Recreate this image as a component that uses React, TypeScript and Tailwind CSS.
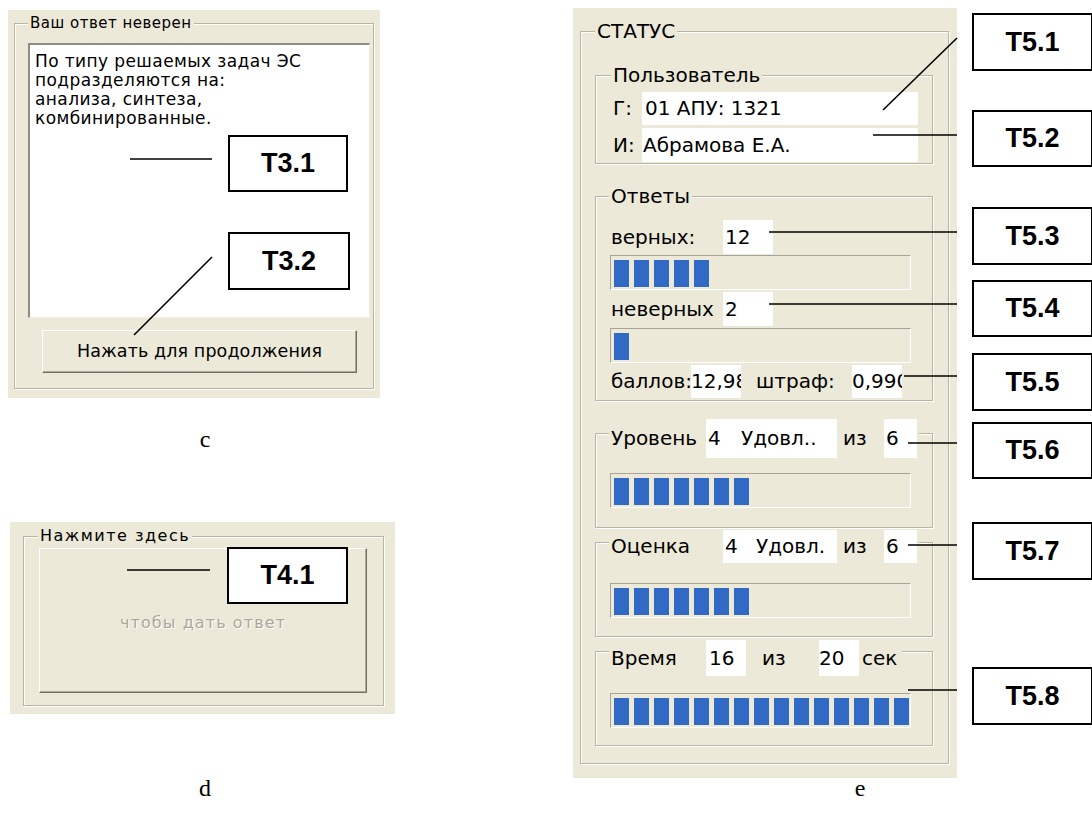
import React from 'react';

const groupBox =
  'border border-[#B8B5A6] shadow-[inset_1px_1px_0_#fff,1px_1px_0_#fff]';

const Progress = ({ count }: { count: number }) => (
  <div className="w-[301px] h-[35px] border border-t-[#A7A497] border-l-[#A7A497] border-b-white border-r-white bg-[#ECE9D8] overflow-hidden flex gap-[5px] pl-[3px] pt-[4px] pb-[2px]">
    {Array.from({ length: count }).map((_, i) => (
      <div key={i} className="w-[15px] h-full shrink-0 bg-[#316AC5]" />
    ))}
  </div>
);

const Tag = ({ label, className }: { label: string; className: string }) => (
  <div
    className={`absolute flex items-center justify-center border-2 border-black bg-white font-['Liberation_Sans',Arial,sans-serif] font-bold text-[27px] ${className}`}
  >
    {label}
  </div>
);

const lines: [number, number, number, number][] = [
  [130, 159, 212, 159],
  [212, 257, 134, 335],
  [127, 570, 210, 570],
  [883, 110, 957, 38],
  [873, 135, 957, 135],
  [769, 232, 957, 232],
  [769, 304, 957, 304],
  [904, 376, 957, 376],
  [908, 443, 957, 443],
  [908, 545, 957, 545],
  [908, 690, 957, 690],
];

export default function App() {
  return (
    <div className="relative w-[1092px] h-[828px] bg-white overflow-hidden text-black font-['DejaVu_Sans',sans-serif]">
      <div className="flex items-start">
        {/* left column: c and d */}
        <div className="ml-[8px] mt-[10px] w-[387px] flex flex-col">
          <div className="w-[372px] h-[388px] bg-[#ECE9D8] pl-[6px] pt-[4px]">
            <fieldset className={`w-[360px] h-[375px] ${groupBox}`}>
              <legend className="ml-[13px] px-[2px] bg-[#ECE9D8] text-[15px] leading-[19px] tracking-[0.5px]">
                Ваш ответ неверен
              </legend>
              <div className="ml-[13px] mt-[10px] w-[342px] h-[275px] bg-white border-t-2 border-l-2 border-t-[#8E8C84] border-l-[#8E8C84] border-r border-b border-r-[#F1EFE2] border-b-[#F1EFE2] pl-[5px] pt-[7px] text-[17px] leading-[19px] tracking-[0.4px]">
                По типу решаемых задач ЭС
                <br />
                подразделяются на:
                <br />
                анализа, синтеза,
                <br />
                комбинированные.
              </div>
              <button className="ml-[27px] mt-[12px] w-[315px] h-[43px] bg-[#ECE9D8] border border-t-white border-l-white border-b-[#716F64] border-r-[#716F64] shadow-[inset_-1px_-1px_0_#ACA899] text-[17.5px] tracking-[0.1px]">
                Нажать для продолжения
              </button>
            </fieldset>
          </div>

          <div className="h-[124px] pt-[27px] pl-[7px] text-center font-['Liberation_Serif',serif] text-[24px] leading-[28px]">
            c
          </div>

          <div className="ml-[2px] w-[385px] h-[192px] bg-[#ECE9D8] pl-[13px] pt-[4px]">
            <fieldset className={`w-[361px] h-[180px] ${groupBox}`}>
              <legend className="ml-[14px] px-[2px] bg-[#ECE9D8] text-[16px] leading-[20px] tracking-[1.5px]">
                Нажмите здесь
              </legend>
              <div className="ml-[15px] mt-[2px] w-[328px] h-[145px] bg-[#ECE9D8] border border-t-white border-l-white border-b-[#716F64] border-r-[#716F64] shadow-[inset_-1px_-1px_0_#ACA899] flex items-center justify-center pt-[5px] text-[16px] tracking-[1.1px] text-[#ACA899] [text-shadow:1px_1px_0_#fff]">
                чтобы дать ответ
              </div>
            </fieldset>
          </div>

          <div className="mt-[60px] h-[28px] pl-[7px] text-center font-['Liberation_Serif',serif] text-[24px] leading-[28px]">
            d
          </div>
        </div>

        {/* right column: e */}
        <div className="ml-[178px] mt-[8px] flex flex-col">
          <div className="w-[384px] h-[770px] bg-[#ECE9D8] pl-[7px] pt-[12px] text-[20px] leading-[23px]">
            <fieldset className={`w-[369px] h-[744px] ${groupBox}`}>
              <legend className="ml-[14px] px-[2px] bg-[#ECE9D8]">СТАТУС</legend>

              <fieldset className={`ml-[14px] mt-[21px] w-[338px] h-[100px] ${groupBox}`}>
                <legend className="ml-[15px] px-[2px] bg-[#ECE9D8]">Пользователь</legend>
                <div className="mt-[5px] pl-[17px] flex flex-col gap-[3px]">
                  <div className="flex items-center">
                    <span className="w-[29px]">Г:</span>
                    <div className="w-[276px] h-[33px] bg-white flex items-center pl-[3px]">01 АПУ: 1321</div>
                  </div>
                  <div className="flex items-center">
                    <span className="w-[29px]">И:</span>
                    <div className="w-[276px] h-[34px] bg-white flex items-center pl-[1px]">Абрамова Е.А.</div>
                  </div>
                </div>
              </fieldset>

              <fieldset className={`ml-[14px] mt-[21px] w-[338px] h-[216px] ${groupBox}`}>
                <legend className="ml-[13px] px-[2px] bg-[#ECE9D8]">Ответы</legend>
                <div className="pl-[14px] flex flex-col">
                  <div className="mt-[12px] flex items-center">
                    <span className="w-[113px] pl-[1px]">верных:</span>
                    <div className="w-[50px] h-[34px] bg-white flex items-center pl-[2px]">12</div>
                  </div>
                  <div className="mt-[1px]">
                    <Progress count={5} />
                  </div>
                  <div className="mt-[2px] flex items-center">
                    <span className="w-[113px] pl-[1px]">неверных</span>
                    <div className="w-[50px] h-[34px] bg-white flex items-center pl-[2px]">2</div>
                  </div>
                  <div className="mt-[2px]">
                    <Progress count={1} />
                  </div>
                  <div className="mt-[2px] flex items-center">
                    <span className="w-[81px] pl-[1px] whitespace-nowrap">баллов:</span>
                    <div className="w-[50px] h-[33px] bg-white flex items-center overflow-hidden whitespace-nowrap">12,98</div>
                    <span className="w-[111px] pl-[15px]">штраф:</span>
                    <div className="w-[50px] h-[33px] bg-white flex items-center overflow-hidden whitespace-nowrap">0,990</div>
                  </div>
                </div>
              </fieldset>

              <fieldset className={`ml-[14px] mt-[18px] w-[338px] h-[109px] ${groupBox}`}>
                <legend className="ml-[13px] px-[2px] bg-[#ECE9D8]">
                  <div className="flex items-center h-[39px] -mb-[11px] whitespace-nowrap">
                    <span className="w-[95px]">Уровень</span>
                    <div className="w-[131px] h-[39px] bg-white flex items-center">
                      <span className="w-[35px] pl-[2px]">4</span>
                      <span>Удовл..</span>
                    </div>
                    <span className="w-[47px] pl-[6px]">из</span>
                    <div className="w-[33px] h-[39px] bg-white flex items-center pl-[2px]">6</div>
                  </div>
                </legend>
                <div className="mt-[26px] pl-[14px]">
                  <Progress count={7} />
                </div>
              </fieldset>

              <fieldset className={`ml-[14px] mt-[2px] w-[338px] h-[107px] ${groupBox}`}>
                <legend className="ml-[13px] px-[2px] bg-[#ECE9D8]">
                  <div className="flex items-center h-[33px] -mb-[9px] whitespace-nowrap">
                    <span className="w-[112px]">Оценка</span>
                    <div className="w-[114px] h-[33px] bg-white flex items-center">
                      <span className="w-[33px] pl-[2px]">4</span>
                      <span>Удовл.</span>
                    </div>
                    <span className="w-[47px] pl-[6px]">из</span>
                    <div className="w-[33px] h-[33px] bg-white flex items-center pl-[2px]">6</div>
                  </div>
                </legend>
                <div className="mt-[29px] pl-[14px]">
                  <Progress count={7} />
                </div>
              </fieldset>

              <fieldset className={`ml-[14px] mt-[3px] w-[338px] h-[106px] ${groupBox}`}>
                <legend className="ml-[13px] px-[2px] bg-[#ECE9D8]">
                  <div className="flex items-center h-[36px] -mb-[14px] whitespace-nowrap">
                    <span className="w-[95px]">Время</span>
                    <div className="w-[40px] h-[36px] bg-white flex items-center pl-[3px]">16</div>
                    <span className="w-[73px] pl-[16px]">из</span>
                    <div className="w-[40px] h-[36px] bg-white flex items-center">20</div>
                    <span className="pl-[3px] pr-[3px]">сек</span>
                  </div>
                </legend>
                <div className="mt-[31px] pl-[14px]">
                  <Progress count={15} />
                </div>
              </fieldset>
            </fieldset>
          </div>
          <div className="-mt-[4px] h-[28px] pl-[190px] text-center font-['Liberation_Serif',serif] text-[24px] leading-[28px]">
            e
          </div>
        </div>
      </div>

      {/* annotation overlay */}
      <svg className="absolute inset-0 pointer-events-none" width="1092" height="828">
        {lines.map(([x1, y1, x2, y2], i) => (
          <line key={i} x1={x1} y1={y1} x2={x2} y2={y2} stroke="#000" strokeWidth="1.6" />
        ))}
      </svg>
      <Tag label="T3.1" className="left-[228px] top-[135px] w-[120px] h-[57px]" />
      <Tag label="T3.2" className="left-[228px] top-[232px] w-[122px] h-[58px]" />
      <Tag label="T4.1" className="left-[227px] top-[547px] w-[121px] h-[57px]" />
      <Tag label="T5.1" className="left-[972px] top-[13px] w-[121px] h-[58px]" />
      <Tag label="T5.2" className="left-[972px] top-[110px] w-[121px] h-[57px]" />
      <Tag label="T5.3" className="left-[972px] top-[207px] w-[121px] h-[58px]" />
      <Tag label="T5.4" className="left-[972px] top-[280px] w-[121px] h-[57px]" />
      <Tag label="T5.5" className="left-[972px] top-[353px] w-[121px] h-[58px]" />
      <Tag label="T5.6" className="left-[972px] top-[422px] w-[121px] h-[57px]" />
      <Tag label="T5.7" className="left-[972px] top-[522px] w-[121px] h-[58px]" />
      <Tag label="T5.8" className="left-[972px] top-[667px] w-[121px] h-[58px]" />
    </div>
  );
}
